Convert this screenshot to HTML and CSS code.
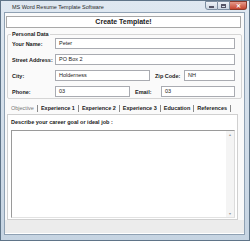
FILE: index.html
```html
<!DOCTYPE html>
<html>
<head>
<meta charset="utf-8">
<link rel="stylesheet" href="styles.css">
</head>
<body>
<div class="window">
  <div class="titlebar">
    <span class="title">MS Word Resume Template Software</span>
    <div class="controls">
      <span class="ctl min"><i></i></span>
      <span class="ctl max"><i></i></span>
      <span class="ctl close">✕</span>
    </div>
  </div>
  <div class="client">
    <div class="create">Create Template!</div>
    <fieldset class="group">
      <legend>Personal Data</legend>
      <div class="row">
        <label class="lbl">Your Name:</label>
        <div class="box grow">Peter</div>
      </div>
      <div class="row">
        <label class="lbl">Street Address:</label>
        <div class="box grow">PO Box 2</div>
      </div>
      <div class="row">
        <label class="lbl">City:</label>
        <div class="box city">Holderness</div>
        <label class="lbl2 zip">Zip Code:</label>
        <div class="box grow">NH</div>
      </div>
      <div class="row">
        <label class="lbl">Phone:</label>
        <div class="box phone">03</div>
        <label class="lbl2 email">Email:</label>
        <div class="box grow">03</div>
      </div>
    </fieldset>
    <div class="tabs">
      <span class="tab active">Objective</span>
      <span class="tab">Experience 1</span>
      <span class="tab">Experience 2</span>
      <span class="tab">Experience 3</span>
      <span class="tab">Education</span>
      <span class="tab">References</span>
    </div>
    <div class="panel">
      <div class="prompt">Describe your career goal or ideal job :</div>
      <div class="textarea">
        <div class="scroll"><span class="arr">▴</span><span class="arr">▾</span></div>
      </div>
    </div>
    <div class="status"></div>
  </div>
</div>
</body>
</html>
```
FILE: styles.css
```css
* { box-sizing: border-box; }
html, body { margin: 0; padding: 0; background: #fff; }
body { font-family: "Liberation Sans", Arial, sans-serif; color: #1a1a1a; }

.window {
  width: 250px;
  height: 241px;
  border: 1px solid #5f7488;
  background: linear-gradient(#dfe8f1, #c6d4e2);
  display: flex;
  flex-direction: column;
  padding: 0 4px 5px 3px;
}
.titlebar {
  height: 11px;
  display: flex;
  align-items: center;
  justify-content: space-between;
}
.title {
  font-size: 5.5px;
  color: #2a2a2a;
  margin-left: 8px;
  margin-top: 1px;
}
.controls {
  display: flex;
  align-self: flex-start;
  margin-right: -2px;
}
.ctl {
  height: 9px;
  border: 1px solid #7d8ea1;
  background: linear-gradient(#eef2f7, #cbd6e2);
  display: flex;
  align-items: center;
  justify-content: center;
}
.min { width: 13px; border-radius: 0 0 0 3px; }
.min i { width: 5px; height: 2px; background: #556; margin-top: 3px; }
.max { width: 12px; border-left: none; }
.max i { width: 5px; height: 4px; border: 1px solid #556; border-top-width: 2px; }
.close {
  width: 17px;
  border-left: none;
  border-radius: 0 0 3px 0;
  background: linear-gradient(#e59a8c, #c6452f);
  border-color: #8a3a2c;
  color: #fff;
  font-size: 6px;
  font-weight: bold;
}

.client {
  flex: 1;
  background: #fafafa;
  border: 1px solid #8fa1b3;
  display: flex;
  flex-direction: column;
  padding: 3px 3px 0 1px;
}
.create {
  height: 12px;
  background: #fff;
  border: 1px solid #a8a8a8;
  font-size: 7px;
  font-weight: bold;
  text-align: center;
  line-height: 10px;
}

.group {
  margin: 3px -1px 0 1px;
  padding: 1px 6px 3px 4px;
  border: 1px solid #d5d5d5;
  border-radius: 2px;
  display: flex;
  flex-direction: column;
  gap: 5px;
  height: 68px;
}
.group legend {
  font-size: 5.5px;
  font-weight: bold;
  padding: 0 1px;
  margin-left: -1px;
  line-height: 6px;
}
.row {
  display: flex;
  align-items: center;
  height: 11px;
}
.lbl, .lbl2 {
  font-size: 5.5px;
  font-weight: bold;
  white-space: nowrap;
}
.lbl { width: 43px; flex: none; }
.zip { width: 34px; padding-left: 5px; flex: none; }
.email { width: 31px; padding-left: 5px; flex: none; }
.box {
  height: 11px;
  border: 1px solid #a9abb1;
  background: #fff;
  font-size: 5.5px;
  padding: 1px 0 0 3px;
  line-height: 6px;
}
.grow { flex: 1; }
.city { width: 95px; flex: none; }
.phone { width: 75px; flex: none; }

.tabs {
  display: flex;
  margin: 4px 0 0 5px;
  height: 11px;
  align-items: center;
}
.tab {
  font-size: 5.5px;
  font-weight: bold;
  padding: 0 3px 0 3px;
  border-right: 1px solid #8a8a8a;
  line-height: 7px;
  white-space: nowrap;
}
.tab.active { font-weight: normal; color: #777; padding-left: 0; padding-right: 3px; }

.panel {
  height: 106px;
  background: #fff;
  border: 1px solid #d0d0d0;
  margin: 0 3px 0 1px;
  padding: 4px 2px 1px 3px;
  display: flex;
  flex-direction: column;
}
.prompt {
  font-size: 5.5px;
  font-weight: bold;
  line-height: 7px;
}
.textarea {
  flex: 1;
  margin-top: 4px;
  border: 1px solid #9a9a9a;
  border-right-color: #dcdcdc;
  border-bottom-color: #e2e2e2;
  display: flex;
  justify-content: flex-end;
}
.scroll {
  width: 8px;
  background: #f4f4f4;
  display: flex;
  flex-direction: column;
  justify-content: space-between;
  align-items: center;
}
.arr { font-size: 4px; color: #999; line-height: 7px; }

.status {
  flex: 1;
  background: #ececec;
  margin: 0 -3px 0 -1px;
  border-bottom: 1px solid #fff;
}
```
